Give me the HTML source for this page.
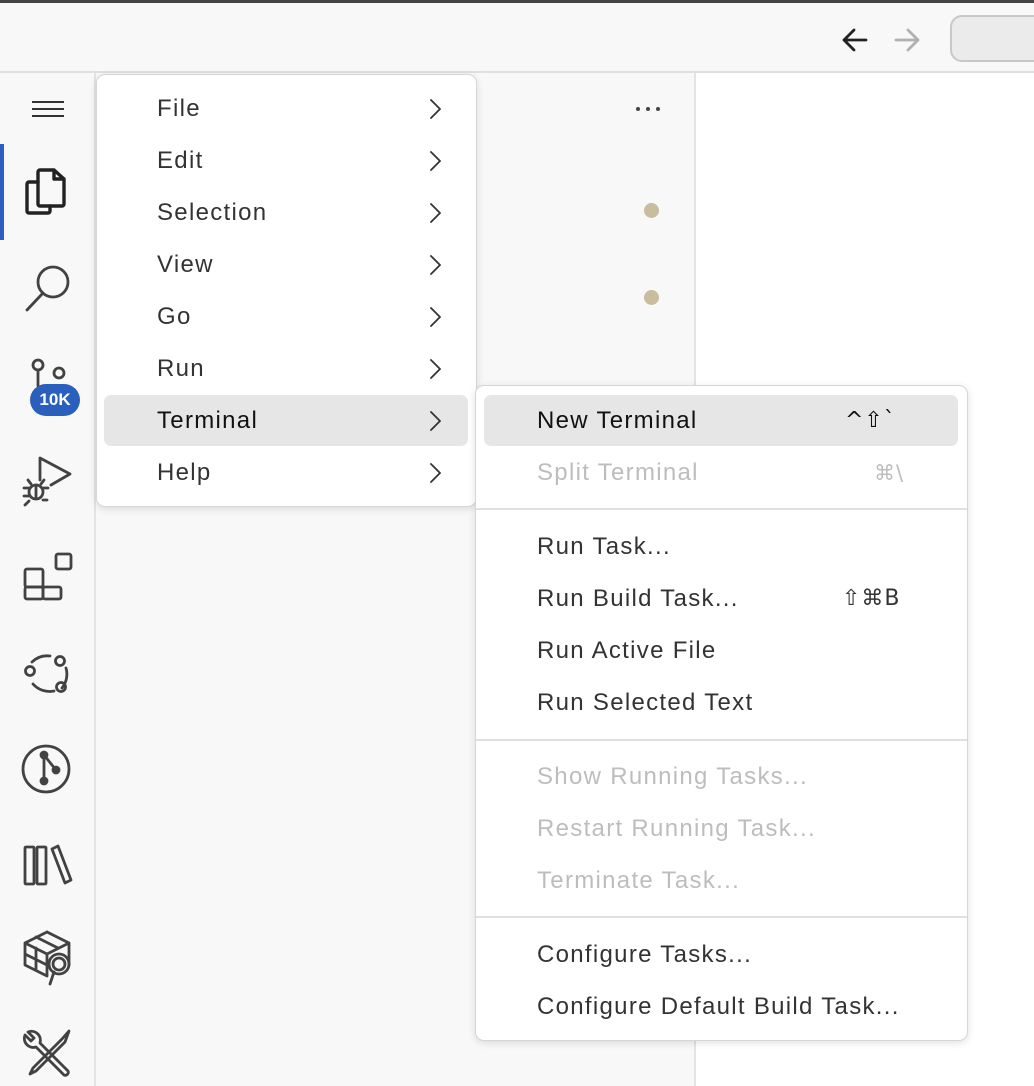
<!DOCTYPE html>
<html><head><meta charset="utf-8"><style>
*{margin:0;padding:0;box-sizing:border-box}
body{width:1034px;height:1086px;overflow:hidden;position:relative;background:#fff;font-family:"Liberation Sans",sans-serif;}
.top{position:absolute;left:0;top:0;width:1034px;height:73px;background:#f8f8f8;border-top:3px solid #444;border-bottom:2px solid #e0e0e0}
.act{position:absolute;left:0;top:73px;width:96px;height:1013px;background:#f8f8f8;border-right:2px solid #e4e4e4}
.side{position:absolute;left:96px;top:73px;width:600px;height:1013px;background:#f8f8f8;border-right:2px solid #e4e4e4}
.menu{position:absolute;background:#fff;border:1px solid #d6d6d6;border-radius:9px;box-shadow:0 2px 8px rgba(0,0,0,.12)}
.it{position:absolute;height:52px;line-height:52px;font-size:24px;letter-spacing:1.3px;color:#333;white-space:nowrap}
.hl{position:absolute;background:#e6e6e6;border-radius:7px}
.dis{color:#bdbdbd}
.sep{position:absolute;height:2px;background:#e0e0e0}
svg{position:absolute;overflow:visible}
.ic{stroke:#424242;fill:none;stroke-width:2.8;stroke-linecap:round;stroke-linejoin:round}
.sc{font-family:"DejaVu Sans",sans-serif;font-size:22px;letter-spacing:1px}
</style></head><body>
<div class="top"></div>
<svg style="left:842px;top:27px" width="26" height="26" class="ic" viewBox="0 0 26 26"><path d="M24 13H2M12 3L2 13l10 10" stroke="#222"/></svg>
<svg style="left:894px;top:27px" width="26" height="26" class="ic" viewBox="0 0 26 26"><path d="M2 13h22M14 3l10 10-10 10" stroke="#b0b0b0"/></svg>
<div style="position:absolute;left:950px;top:15px;width:100px;height:47px;border:2px solid #c8c8c8;border-radius:12px;background:#ebebeb"></div>
<div class="act"></div>
<div style="position:absolute;left:0;top:144px;width:4px;height:96px;background:#2b5fc0"></div>
<div class="side"></div>
<div style="position:absolute;left:636px;top:107px;font-size:0">
<span style="position:absolute;left:0;width:4px;height:4px;border-radius:2px;background:#444"></span>
<span style="position:absolute;left:10px;width:4px;height:4px;border-radius:2px;background:#444"></span>
<span style="position:absolute;left:20px;width:4px;height:4px;border-radius:2px;background:#444"></span></div>
<div style="position:absolute;left:644px;top:203px;width:15px;height:15px;border-radius:8px;background:#c9bd9e"></div>
<div style="position:absolute;left:644px;top:290px;width:15px;height:15px;border-radius:8px;background:#c9bd9e"></div>

<svg style="left:32px;top:100px" width="34" height="20" viewBox="0 0 34 20"><path d="M0 2h32M0 9h32M0 16h32" stroke="#333" stroke-width="2"/></svg>
<svg style="left:24px;top:167px" width="46" height="50" class="ic" viewBox="0 0 46 50"><path d="M14 15H5a2 2 0 0 0-2 2v27a2 2 0 0 0 2 2h19a2 2 0 0 0 2-2v-5" stroke="#222" stroke-width="3.4"/><path d="M14 5a2 2 0 0 1 2-2h14l10 9v25a2 2 0 0 1-2 2H16a2 2 0 0 1-2-2z M30 3v9h10" stroke="#222" stroke-width="3.4"/></svg>
<svg style="left:25px;top:263px" width="48" height="50" class="ic" viewBox="0 0 48 50"><circle cx="28" cy="19" r="15"/><path d="M18 30L2 47"/></svg>
<svg style="left:30px;top:358px" width="40" height="30" class="ic" viewBox="0 0 40 30"><circle cx="8" cy="7" r="5"/><circle cx="29" cy="15" r="5"/><path d="M8 12v16"/></svg>
<div style="position:absolute;left:30px;top:384px;width:50px;height:32px;border-radius:16px;background:#2a5fbe;color:#fff;font-weight:bold;font-size:17px;line-height:32px;text-align:center">10K</div>
<svg style="left:22px;top:455px" width="52" height="52" class="ic" viewBox="0 0 52 52"><path d="M18 3v22M18 3l30 16-19 11"/><circle cx="14" cy="37" r="7"/><path d="M2 33h5M2 41h5M21 33h5M21 45h4M7 46l-4 4M9 29l-3-4M19 29l3-4M14 30v14"/></svg>
<svg style="left:24px;top:551px" width="48" height="50" class="ic" viewBox="0 0 48 50"><rect x="1" y="18" width="18" height="18" rx="2"/><rect x="1" y="36" width="18" height="12" rx="2"/><rect x="19" y="36" width="18" height="12" rx="2"/><rect x="32" y="3" width="15" height="15" rx="2"/></svg>
<svg style="left:22px;top:650px" width="52" height="48" class="ic" viewBox="0 0 52 48"><path d="M10 12a22 22 0 0 1 18-6M44 18a22 22 0 0 1-4 20M32 41a22 22 0 0 1-21-7"/><circle cx="8" cy="21" r="4.5"/><circle cx="38" cy="11" r="4.5"/><circle cx="39" cy="37" r="4.5"/></svg>
<svg style="left:22px;top:744px" width="52" height="52" class="ic" viewBox="0 0 52 52"><circle cx="24" cy="25" r="23"/><path d="M22 11v26M22 11l12 15"/><circle cx="22" cy="11" r="3" fill="#424242"/><circle cx="22" cy="37" r="3" fill="#424242"/><circle cx="34" cy="26" r="3" fill="#424242"/></svg>
<svg style="left:24px;top:845px" width="50" height="40" class="ic" viewBox="0 0 50 40"><rect x="1" y="2" width="9" height="37" rx="1"/><rect x="13" y="2" width="9" height="37" rx="1"/><path d="M28 4l6-3 13 34-6 3z"/></svg>
<svg style="left:23px;top:930px" width="52" height="60" class="ic" viewBox="0 0 52 60"><path d="M24 2l22 11v22M24 2L2 13v22l22 11M2 13l22 11 22-11M24 24v22M13 7l22 11M2 24l22 11M13 18v22"/><circle cx="36" cy="34" r="10" fill="#f8f8f8"/><circle cx="36" cy="34" r="6"/><path d="M31 42l-4 12"/></svg>
<svg style="left:23px;top:1028px" width="50" height="50" class="ic" viewBox="0 0 50 50"><path d="M5 4l6 6-3 3-6-6a9 9 0 0 0 11 12l28 28a3 3 0 0 0 4-4L17 15A9 9 0 0 0 5 4z"/><path d="M46 3l-4 11L13 43l-6 3 3-6 29-29z"/></svg>

<div class="menu" style="left:96px;top:74px;width:381px;height:433px"></div>
<div class="hl" style="left:104px;top:395px;width:364px;height:51px"></div>
<div class="it" style="left:157px;top:83px">File</div>
<div class="it" style="left:157px;top:135px">Edit</div>
<div class="it" style="left:157px;top:187px">Selection</div>
<div class="it" style="left:157px;top:239px">View</div>
<div class="it" style="left:157px;top:291px">Go</div>
<div class="it" style="left:157px;top:343px">Run</div>
<div class="it" style="left:157px;top:395px;color:#111">Terminal</div>
<div class="it" style="left:157px;top:447px">Help</div>
<svg style="left:429px;top:99px" width="14" height="380" class="ic" viewBox="0 0 14 380"><path stroke="#333" stroke-width="1.8" d="M2 1l9 9-9 9M2 53l9 9-9 9M2 105l9 9-9 9M2 157l9 9-9 9M2 209l9 9-9 9M2 261l9 9-9 9M2 313l9 9-9 9M2 365l9 9-9 9"/></svg>

<div class="menu" style="left:475px;top:385px;width:493px;height:656px"></div>
<div class="hl" style="left:484px;top:395px;width:474px;height:51px"></div>
<div class="it" style="left:537px;top:395px;color:#111">New Terminal</div>
<div class="it sc" style="left:845px;top:395px;color:#111">^⇧`</div>
<div class="it dis" style="left:537px;top:447px">Split Terminal</div>
<div class="it dis sc" style="left:874px;top:447px;font-size:21px">⌘\</div>
<div class="sep" style="left:476px;top:508px;width:491px"></div>
<div class="it" style="left:537px;top:521px">Run Task...</div>
<div class="it" style="left:537px;top:573px">Run Build Task...</div>
<div class="it sc" style="left:842px;top:573px">⇧⌘B</div>
<div class="it" style="left:537px;top:625px">Run Active File</div>
<div class="it" style="left:537px;top:677px">Run Selected Text</div>
<div class="sep" style="left:476px;top:739px;width:491px"></div>
<div class="it dis" style="left:537px;top:751px">Show Running Tasks...</div>
<div class="it dis" style="left:537px;top:803px">Restart Running Task...</div>
<div class="it dis" style="left:537px;top:855px">Terminate Task...</div>
<div class="sep" style="left:476px;top:916px;width:491px"></div>
<div class="it" style="left:537px;top:929px">Configure Tasks...</div>
<div class="it" style="left:537px;top:981px">Configure Default Build Task...</div>
</body></html>
